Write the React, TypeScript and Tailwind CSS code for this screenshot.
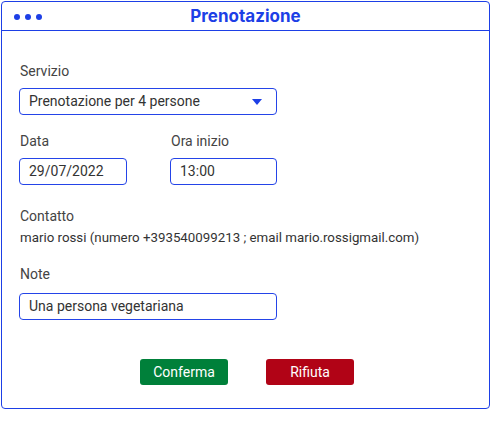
import React from 'react';

const Field: React.FC<{ label: string; children: React.ReactNode; className?: string }> = ({ label, children, className }) => (
  <div className={className}>
    <div className="text-[14px] leading-[20px] text-[#444444]">{label}</div>
    {children}
  </div>
);

const Box: React.FC<{ value: string; width: string; children?: React.ReactNode }> = ({ value, width, children }) => (
  <div className={`${width} -ml-px h-[27px] border border-[#2444e8] rounded-[4px] flex items-center justify-between pl-[9px] pr-[16px] text-[14px] text-[#333333]`}>
    <span>{value}</span>
    {children}
  </div>
);

export default function App() {
  return (
    <div className="w-[491px] h-[421px] bg-white pt-px pl-px" style={{ fontFamily: 'Roboto, "Liberation Sans", sans-serif' }}>
      <div className="w-[489px] h-[408px] border border-[#1d3fe6] rounded-[4px] flex flex-col">
        <div className="relative h-[29px] border-b border-[#1d3fe6] flex items-center justify-center">
          <div className="absolute left-[12px] top-[12px] flex gap-[5px]">
            <span className="w-[6px] h-[6px] rounded-full bg-[#1d3fe6]" />
            <span className="w-[6px] h-[6px] rounded-full bg-[#1d3fe6]" />
            <span className="w-[6px] h-[6px] rounded-full bg-[#1d3fe6]" />
          </div>
          <span className="text-[17px] font-bold text-[#1d3fe6] leading-none" style={{ fontFamily: 'Inter, sans-serif' }}>Prenotazione</span>
        </div>
        <div className="pl-[18px] pt-[30px] flex flex-col">
          <Field label="Servizio">
            <div className="mt-[7px]">
              <Box value="Prenotazione per 4 persone" width="w-[258px]">
                <svg width="10" height="6" viewBox="0 0 10 6" className="mr-[-2px]">
                  <path d="M0 0 H10 L5 6 Z" fill="#1d3fe6" />
                </svg>
              </Box>
            </div>
          </Field>
          <div className="flex gap-[44px] mt-[16px]">
            <Field label="Data">
              <div className="mt-[7px]">
                <Box value="29/07/2022" width="w-[108px]" />
              </div>
            </Field>
            <Field label="Ora inizio">
              <div className="mt-[7px]">
                <Box value="13:00" width="w-[107px]" />
              </div>
            </Field>
          </div>
          <Field label="Contatto" className="mt-[21px]">
            <div className="mt-[3px] text-[13.3px] leading-[18px] text-[#333333]">
              mario rossi (numero +393540099213 ; email mario.rossigmail.com)
            </div>
          </Field>
          <Field label="Note" className="mt-[17px]">
            <div className="mt-[9px]">
              <Box value="Una persona vegetariana" width="w-[258px]" />
            </div>
          </Field>
          <div className="flex justify-center gap-[38px] mt-[39px] pr-[18px] ml-[3px]">
            <button className="w-[88px] h-[26px] rounded-[3px] bg-[#00803a] text-white text-[14px]">Conferma</button>
            <button className="w-[88px] h-[26px] rounded-[3px] bg-[#b10316] text-white text-[14px]">Rifiuta</button>
          </div>
        </div>
      </div>
    </div>
  );
}
